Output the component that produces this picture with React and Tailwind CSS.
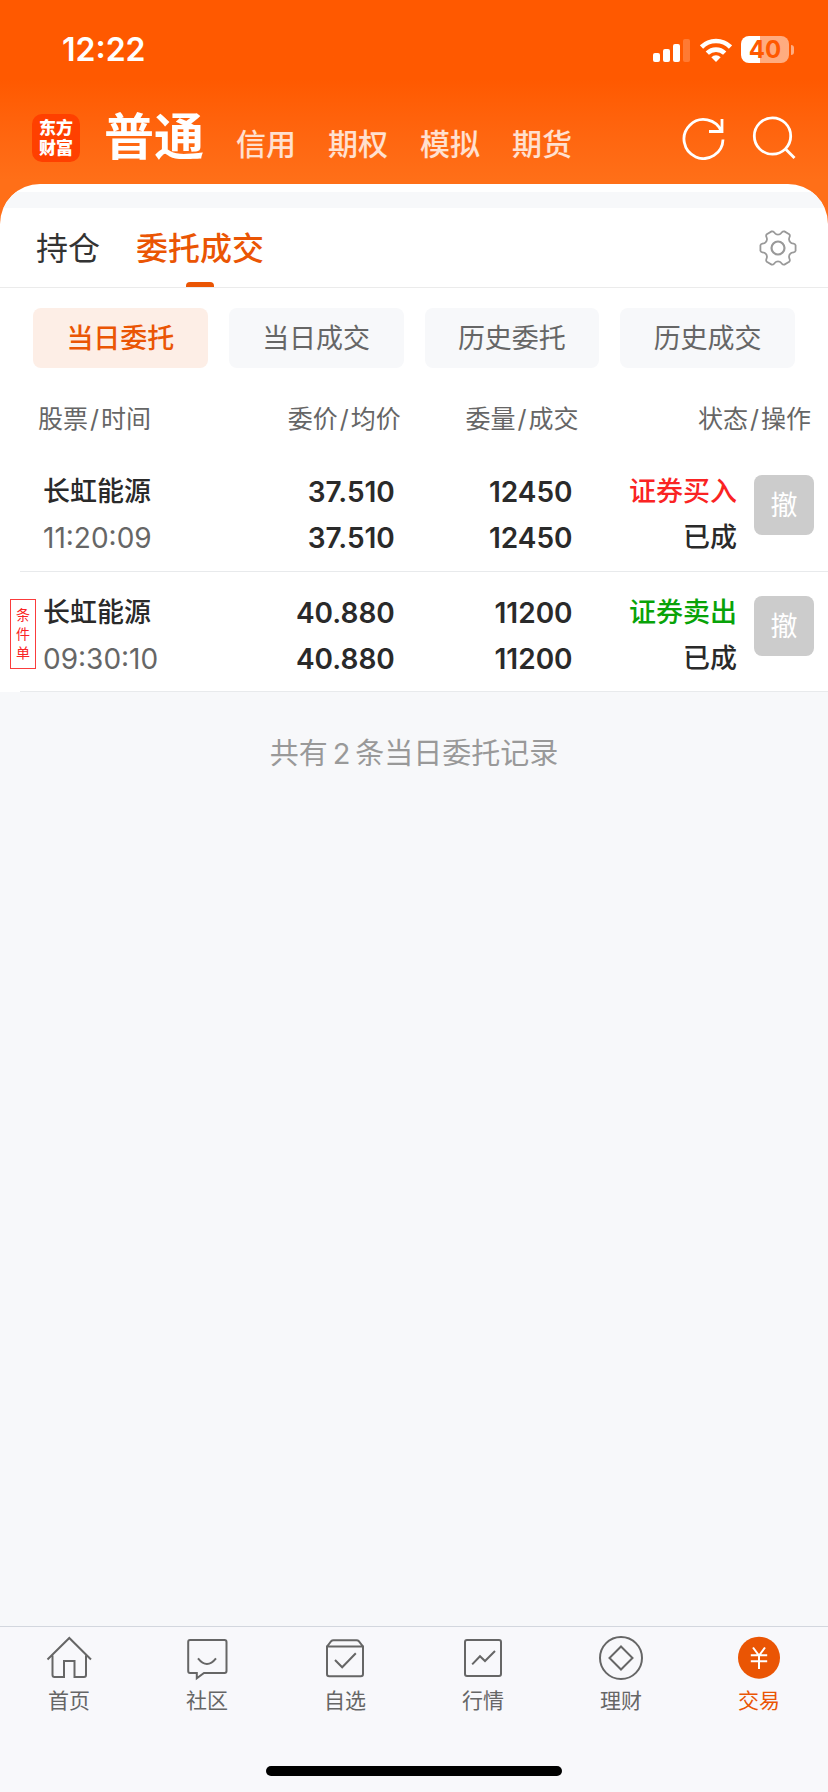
import React from "react";

const polar = (radius, degrees) => {
  const a = (degrees * Math.PI) / 180;
  return `${(20 + radius * Math.cos(a)).toFixed(2)} ${(20 + radius * Math.sin(a)).toFixed(2)}`;
};

// Six flat-tipped teeth joined by shallow valleys.
const gearPath =
  [0, 60, 120, 180, 240, 300]
    .map(
      (a, i) =>
        `${i === 0 ? "M" : "L"}${polar(17.8, a - 9)} L${polar(17.8, a + 9)} Q${polar(17.6, a + 14)} ${polar(16.2, a + 16)} Q${polar(14, a + 20)} ${polar(13.8, a + 24)} Q${polar(13, a + 30)} ${polar(13.8, a + 36)} Q${polar(14, a + 40)} ${polar(16.2, a + 44)} Q${polar(17.6, a + 46)} ${polar(17.8, a + 51)}`
    )
    .join(" ") + " Z";

const orders = [
  {
    name: "长虹能源",
    time: "11:20:09",
    price: "37.510",
    average: "37.510",
    quantity: "12450",
    filled: "12450",
    side: "证券买入",
    sideClass: "text-[#fa2323]",
    status: "已成",
  },
  {
    name: "长虹能源",
    time: "09:30:10",
    price: "40.880",
    average: "40.880",
    quantity: "11200",
    filled: "11200",
    side: "证券卖出",
    sideClass: "text-[#08a308]",
    status: "已成",
    tag: "条件单",
  },
];

const filters = ["当日委托", "当日成交", "历史委托", "历史成交"];

const navItems = [
  {
    label: "首页",
    icon: (
      <path d="M0.5 23.5 L22.3 2 L44 23.5 M5.5 19.5 V39 Q5.5 41 7.5 41 H17 V25 H27.5 V41 H37 Q39 41 39 39 V19.5" />
    ),
  },
  {
    label: "社区",
    icon: (
      <path d="M5 4 H39.5 Q41.5 4 41.5 6 V35 Q41.5 37 39.5 37 H19 L11.8 42.3 V37 H5 Q3.2 37 3.2 35 V6 Q3.2 4 5 4 Z M13 22.3 Q22 33.5 31 22.3" />
    ),
  },
  {
    label: "自选",
    icon: (
      <path d="M4 10.5 H40 V38 Q40 40.3 37.8 40.3 H6.2 Q4 40.3 4 38 Z M4 10.5 L8.2 5.2 Q9 4.2 10.5 4.2 H33.5 Q35 4.2 35.8 5.2 L40 10.5 M12 24 L19.2 31.3 L32.8 17.3" />
    ),
  },
  {
    label: "行情",
    icon: (
      <>
        <rect x="4" y="4" width="36" height="36" rx="2" />
        <path d="M11.2 28.4 L19 20.2 L24 25 L34 15" />
      </>
    ),
  },
  {
    label: "理财",
    icon: (
      <>
        <circle cx="22" cy="22" r="21" />
        <path d="M22 10.5 L33.5 22 L22 33.5 L10.5 22 Z" />
      </>
    ),
  },
  {
    label: "交易",
    active: true,
    icon: (
      <>
        <circle cx="22" cy="21.7" r="21" fill="currentColor" stroke="none" />
        <path d="M16 11.5 L22 19.5 L28 11.5 M22 19.5 V33 M13.8 19.3 H30.2 M13.8 25.3 H30.2" stroke="white" />
      </>
    ),
  },
];

function StatusBar() {
  return (
    <div className="flex h-[99px] items-center justify-between pr-[34px] pl-[62px]">
      <span className="text-[32px] leading-10 font-semibold">12:22</span>
      <div className="flex items-center gap-[9px]">
        <svg className="h-6 w-[38px]" viewBox="0 0 38 24" fill="currentColor" aria-hidden="true">
          <rect x="0" y="15" width="7" height="9" rx="2" />
          <rect x="10" y="11" width="7" height="13" rx="2" />
          <rect x="20" y="6" width="7" height="18" rx="2" />
          <rect x="30" y="1" width="7" height="23" rx="2" opacity="0.2" />
        </svg>
        <svg className="h-6 w-8" viewBox="0 0 32 24" fill="none" stroke="currentColor" strokeWidth="4.6" aria-hidden="true">
          <path d="M1.5 9 A20.5 20.5 0 0 1 30.5 9" />
          <path d="M7.3 15.2 A12.3 12.3 0 0 1 24.7 15.2" />
          <path d="M16 24 L11.3 19.2 A6.8 6.8 0 0 1 20.7 19.2 Z" fill="currentColor" stroke="none" />
        </svg>
        <div className="flex items-center gap-0.5">
          <div className="flex h-[27px] w-12 items-center justify-center rounded-lg bg-linear-to-r from-white from-40% to-white/50 to-40% text-2xl font-bold text-[#ff5900]">
            40
          </div>
          <div className="h-2.5 w-[3px] rounded-r-full bg-white/50" />
        </div>
      </div>
    </div>
  );
}

function Header() {
  return (
    <header className="bg-linear-to-b from-[#ff5900] from-35% to-[#ff6f18] to-80% pb-12 text-white">
      <StatusBar />
      <div className="flex h-[78px] items-center justify-between pr-8 pl-8">
        <div className="flex items-center gap-6">
          <div className="flex size-12 flex-col items-center justify-center rounded-[10px] bg-[#ff4000] text-[17px] leading-5 font-black">
            <span>东方</span>
            <span>财富</span>
          </div>
          <nav className="flex items-baseline gap-8 pt-1 text-[30px] leading-[60px] font-medium text-white/80">
            <a href="#normal" className="text-[50px] font-bold text-white">普通</a>
            <a href="#margin">信用</a>
            <a href="#options">期权</a>
            <a href="#simulated">模拟</a>
            <a href="#futures">期货</a>
          </nav>
        </div>
        <div className="flex items-center gap-[26px]">
          <button type="button" aria-label="刷新">
            <svg className="size-11" viewBox="0 0 44 44" fill="none" stroke="currentColor" strokeWidth="2.8">
              <path d="M41 23.5 A19.5 19.5 0 1 1 39.5 15.5 M40 3 V15.5 M27 15.5 H41.4" />
            </svg>
          </button>
          <button type="button" aria-label="搜索">
            <svg className="size-11" viewBox="0 0 44 44" fill="none" stroke="currentColor" strokeWidth="2.8">
              <circle cx="20.5" cy="20" r="18.2" />
              <path d="M33.5 33 L42.5 42" />
            </svg>
          </button>
        </div>
      </div>
    </header>
  );
}

function Tabs() {
  return (
    <div className="flex h-20 items-center justify-between border-b border-[#ebebeb] pr-[30px] pl-9">
      <div className="flex h-full gap-9 text-[32px]">
        <button type="button" className="h-full pt-0.5 text-[#333]">持仓</button>
        <button type="button" className="relative h-full pt-0.5 font-medium text-[#ea5504]">
          委托成交
          <span className="absolute bottom-0 left-1/2 h-[5px] w-7 -translate-x-1/2 rounded-t-sm bg-[#ea5504]" />
        </button>
      </div>
      <button type="button" aria-label="设置" className="text-[#999]">
        <svg className="size-10" viewBox="0 0 40 40" fill="none" stroke="currentColor" strokeWidth="1.8" strokeLinejoin="round">
          <path d={gearPath} />
          <circle cx="20" cy="20" r="6.5" strokeWidth="2.2" />
        </svg>
      </button>
    </div>
  );
}

function Filters() {
  return (
    <div className="grid grid-cols-4 gap-[21px] px-[33px] pt-5">
      {filters.map((label, i) => (
        <button
          key={label}
          type="button"
          className={
            i === 0
              ? "h-[60px] rounded-lg bg-[#fdeee6] pt-[3px] text-[27px] font-medium text-[#ea5504]"
              : "h-[60px] rounded-lg bg-[#f7f8fa] pt-[3px] text-[27px] text-[#666]"
          }
        >
          {label}
        </button>
      ))}
    </div>
  );
}

function PairLabel({ first, second }) {
  return (
    <>
      {first}
      <span className="mx-0.5">/</span>
      {second}
    </>
  );
}

function OrdersTable() {
  return (
    <div className="pl-5">
      <table className="w-full table-fixed border-collapse">
        <colgroup>
          <col className="w-[26%]" />
          <col className="w-[22%]" />
          <col className="w-[22%]" />
          <col />
          <col className="w-[74px]" />
        </colgroup>
        <thead>
          <tr className="h-[83px] text-[25px] leading-9 whitespace-nowrap text-[#666]">
            <th className="pt-[33px] pl-[18px] text-left align-top font-normal">
              <PairLabel first="股票" second="时间" />
            </th>
            <th className="pt-[33px] pr-[7px] text-right align-top font-normal">
              <PairLabel first="委价" second="均价" />
            </th>
            <th className="pt-[33px] pr-[7px] text-right align-top font-normal">
              <PairLabel first="委量" second="成交" />
            </th>
            <th colSpan={2} className="pt-[33px] pr-[17px] text-right align-top font-normal">
              <PairLabel first="状态" second="操作" />
            </th>
          </tr>
        </thead>
        <tbody>
          {orders.map((order) => (
            <tr key={order.time} className="h-[120px] border-b border-[#e8eaec] text-[27px] leading-[46px] font-semibold text-[#2a2a2a]">
              <td className="relative pt-[9px] pl-[23px]">
                {order.tag && (
                  <span className="absolute top-[27px] -left-2.5 flex h-[70px] w-[26px] items-center justify-center border border-[#fa3c3c] px-1 text-center text-sm leading-[19px] font-normal break-all text-[#fa2323]">
                    {order.tag}
                  </span>
                )}
                <div className="font-medium">{order.name}</div>
                <div className="text-[28px] font-normal text-[#666]">{order.time}</div>
              </td>
              <td className="pt-[9px] pr-[13px] text-right text-[28px]">
                <div>{order.price}</div>
                <div>{order.average}</div>
              </td>
              <td className="pt-[9px] pr-[13px] text-right text-[28px]">
                <div>{order.quantity}</div>
                <div>{order.filled}</div>
              </td>
              <td className="pt-[9px] pr-[17px] text-right font-medium">
                <div className={order.sideClass}>{order.side}</div>
                <div>{order.status}</div>
              </td>
              <td className="pt-6 align-top">
                <button type="button" className="block size-[60px] rounded-lg bg-[#ccc] pt-0.5 text-[27px] font-normal text-white">
                  撤
                </button>
              </td>
            </tr>
          ))}
        </tbody>
      </table>
    </div>
  );
}

function BottomNav() {
  return (
    <footer className="border-t border-[#d3d7de] bg-[#f8f8fb]">
      <nav className="grid grid-cols-6 pt-[9px]">
        {navItems.map((item) => (
          <a
            key={item.label}
            href={`#${item.label}`}
            className={
              item.active
                ? "flex flex-col items-center gap-[5px] text-[21px] leading-8 text-[#ea5504]"
                : "flex flex-col items-center gap-[5px] text-[21px] leading-8 text-[#666]"
            }
          >
            <svg className="size-11 overflow-visible" viewBox="0 0 44 44" fill="none" stroke="currentColor" strokeWidth="2" aria-hidden="true">
              {item.icon}
            </svg>
            {item.label}
          </a>
        ))}
      </nav>
      <div className="flex justify-center pt-[49px] pb-4">
        <div className="h-2.5 w-[296px] rounded-full bg-black" />
      </div>
    </footer>
  );
}

export default function App() {
  return (
    <div className="flex min-h-screen flex-col bg-[#f7f8fa] font-['Inter','Noto_Sans_CJK_SC',sans-serif]">
      <Header />
      <main className="-mt-[41px] grow">
        <section className="overflow-hidden rounded-t-[40px] bg-white">
          <div className="mt-2 h-4 bg-[#f7f8fa]" />
          <Tabs />
          <Filters />
          <OrdersTable />
        </section>
        <p className="pt-[42px] text-center text-[29px] leading-10 text-[#999]">
          共有<span className="mx-[5px]">2</span>条当日委托记录
        </p>
      </main>
      <BottomNav />
    </div>
  );
}
